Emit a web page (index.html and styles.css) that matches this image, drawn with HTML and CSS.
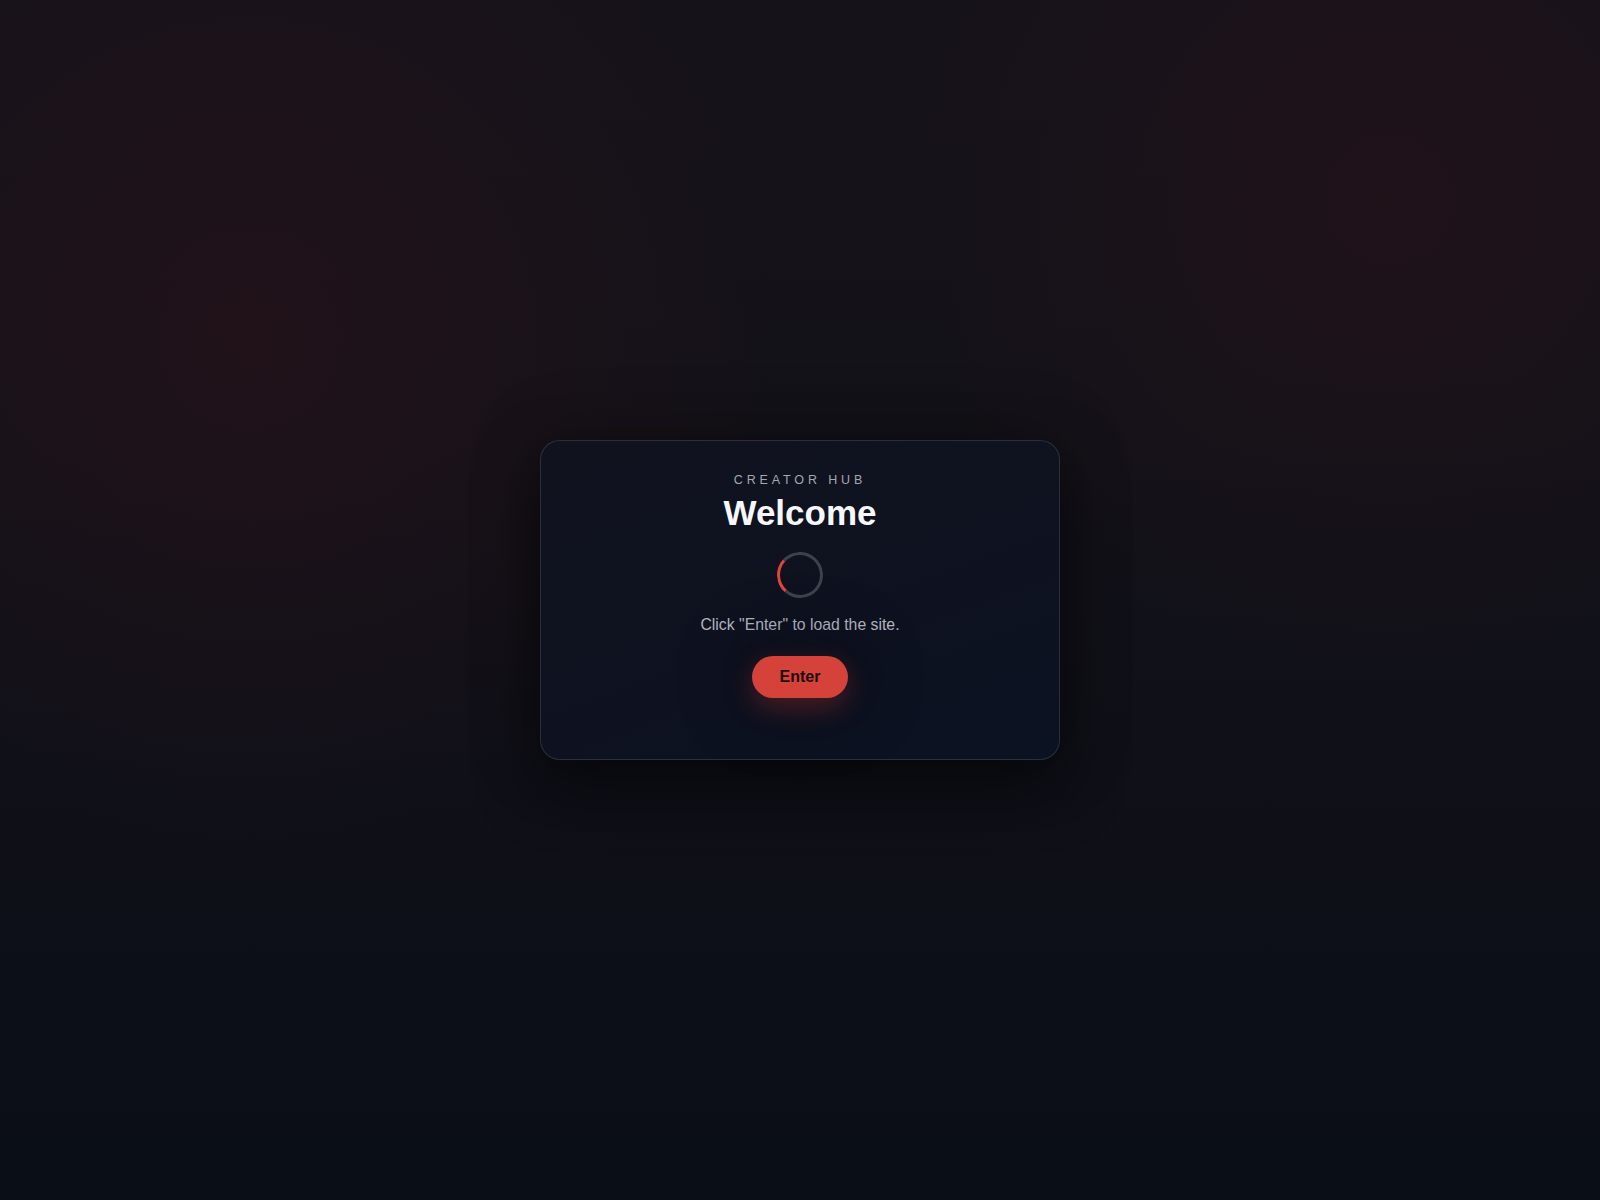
FILE: index.html
```html
<!DOCTYPE html>
<html lang="en">
<head>
<meta charset="utf-8">
<title>Creator Hub</title>
<link rel="stylesheet" href="styles.css">
</head>
<body>
<main class="stage">
  <section class="card">
    <div class="eyebrow">CREATOR HUB</div>
    <h1 class="title">Welcome</h1>
    <div class="spinner"></div>
    <p class="hint">Click "Enter" to load the site.</p>
    <button class="enter" type="button">Enter</button>
  </section>
</main>
</body>
</html>
```

FILE: styles.css
```css
* { box-sizing: border-box; }
html, body { margin: 0; height: 100%; }
body {
  font-family: "Liberation Sans", Arial, sans-serif;
  background:
    radial-gradient(circle 520px at 250px 340px, rgba(44, 18, 26, 0.55), rgba(44, 18, 26, 0.25) 50%, rgba(44, 18, 26, 0) 100%),
    radial-gradient(circle 480px at 1390px 200px, rgba(44, 18, 26, 0.5), rgba(44, 18, 26, 0.2) 50%, rgba(44, 18, 26, 0) 100%),
    linear-gradient(180deg, #16121a 0%, #141219 35%, #0f1018 65%, #0a0e17 100%);
  color: #f4f6fb;
  min-height: 1200px;
}
.stage {
  min-height: 1200px;
  display: flex;
  align-items: center;
  justify-content: center;
}
.card {
  width: 520px;
  height: 320px;
  border-radius: 20px;
  border: 1px solid rgba(255, 255, 255, 0.12);
  background: linear-gradient(160deg, #10131e 0%, #0e1220 60%, #0b1222 100%);
  box-shadow: 0 24px 60px rgba(0, 0, 0, 0.5), 0 0 70px rgba(0, 0, 0, 0.25);
  display: flex;
  flex-direction: column;
  align-items: center;
  padding-top: 31px;
}
.eyebrow {
  font-size: 12.5px;
  line-height: 16px;
  letter-spacing: 0.31em;
  color: #a3a8b3;
}
.title {
  margin: 4px 0 0;
  font-size: 35px;
  line-height: 42px;
  font-weight: 700;
  color: #f5f7fc;
}
.spinner {
  margin-top: 18px;
  width: 46px;
  height: 46px;
  border-radius: 50%;
  border: 3px solid #3c414c;
  border-left-color: #e0443b;
  transform: rotate(-3deg);
}
.hint {
  margin: 17px 0 0;
  font-size: 15.8px;
  line-height: 19px;
  color: #b4b9c3;
}
.enter {
  margin-top: 22px;
  width: 96px;
  height: 42px;
  border: none;
  border-radius: 21px;
  background: #d4423a;
  color: #1a0b0b;
  font-family: "Liberation Sans", Arial, sans-serif;
  font-size: 16px;
  font-weight: 700;
  box-shadow: 0 10px 28px rgba(214, 64, 56, 0.3), 0 0 60px 20px rgba(6, 8, 14, 0.3);
  cursor: pointer;
}
```
